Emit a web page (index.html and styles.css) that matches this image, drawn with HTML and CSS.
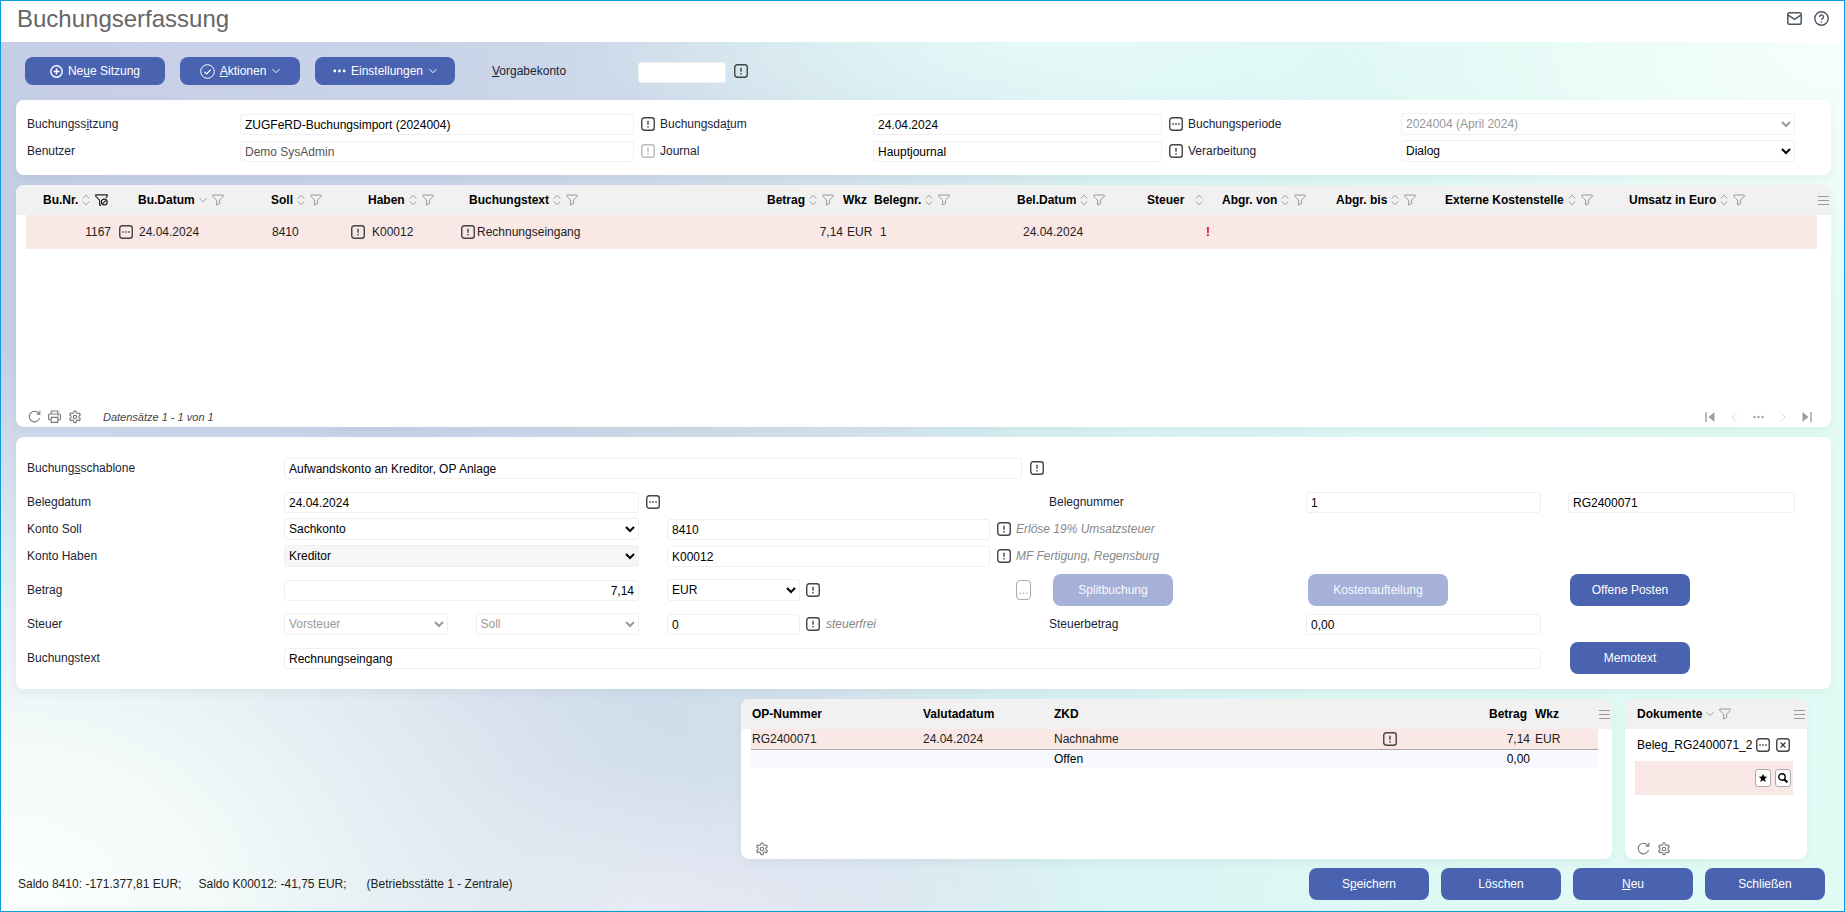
FILE: index.html
```html
<!DOCTYPE html>
<html lang="de">
    <head>
        <meta charset="UTF-8" />
        <meta name="viewport" content="width=device-width, initial-scale=1.0" />
        <title>Buchungserfassung</title>

        <link rel="stylesheet" href="styles.css">
    </head>
    <body>
        <!-- icons -->
        <svg class="sprite" xmlns="http://www.w3.org/2000/svg">
            <symbol id="i-info" viewBox="0 0 14 14">
                <rect x="0.75" y="0.75" width="12.5" height="12.5" rx="2.5" fill="none" stroke="currentColor" stroke-width="1.4" />
                <path d="M7 3.8v4M7 9v1.4" stroke="currentColor" stroke-width="1.4" />
            </symbol>
            <symbol id="i-more" viewBox="0 0 14 14">
                <rect x="0.75" y="0.75" width="12.5" height="12.5" rx="2.5" fill="none" stroke="currentColor" stroke-width="1.4" />
                <path d="M3.2 7h1.6M6.2 7h1.6M9.2 7h1.6" stroke="currentColor" stroke-width="1.5" />
            </symbol>
            <symbol id="i-close" viewBox="0 0 14 14">
                <rect x="0.75" y="0.75" width="12.5" height="12.5" rx="2.5" fill="none" stroke="currentColor" stroke-width="1.4" />
                <path d="M4.6 4.6l4.8 4.8M9.4 4.6l-4.8 4.8" stroke="currentColor" stroke-width="1.4" />
            </symbol>
            <symbol id="i-sort" viewBox="0 0 8 12">
                <path d="M0.8 4.4L4 1.2l3.2 3.2M0.8 7.6L4 10.8l3.2-3.2" fill="none" stroke="currentColor" />
            </symbol>
            <symbol id="i-down" viewBox="0 0 8 12">
                <path d="M0.5 4.2L4 7.7l3.5-3.5" fill="none" stroke="currentColor" />
            </symbol>
            <symbol id="i-filter" viewBox="0 0 12 12">
                <path d="M0.8 1h10.4v1.3L7.6 6.2v3.4L4.6 11V6.2L0.8 2.3z" fill="none" stroke="currentColor" stroke-linejoin="round" />
            </symbol>
            <symbol id="i-filter-on" viewBox="0 0 13 12">
                <path d="M6 11.2H4.600V6.200L0.800 2.300V0.800h11.400v1.500L10.800 3.800" fill="none" stroke="currentColor" stroke-width="1.200" />
                <circle cx="9.300" cy="8" r="2.900" fill="none" stroke="currentColor" stroke-width="1.200" />
                <path d="M7.600 9.700l3.400-3.400" stroke="currentColor" stroke-width="1.200" />
            </symbol>
            <symbol id="i-menu" viewBox="0 0 11 10">
                <path d="M0 1.5h11M0 5.5h11M0 9.5h11" stroke="currentColor" />
            </symbol>
            <symbol id="i-refresh" viewBox="0 0 13 13">
                <path d="M11.6 8.2A5.3 5.3 0 1 1 11 3.6M11.8 0.8v3.4H8.4" fill="none" stroke="currentColor" stroke-width="1.1" />
            </symbol>
            <symbol id="i-print" viewBox="0 0 13 13">
                <path d="M3.2 4V1h6.6v3M3.2 9.8H1.6a1 1 0 0 1-1-1V5a1 1 0 0 1 1-1h9.8a1 1 0 0 1 1 1v3.8a1 1 0 0 1-1 1H9.8M3.2 7.4h6.6v5H3.2zM9.5 5.8h1.3" fill="none" stroke="currentColor" stroke-width="1.1" />
            </symbol>
            <symbol id="i-gear" viewBox="0 0 24 24">
                <path d="M9.6 4.9l.7-3.1h3.4l.7 3.1 2 1.2 3.1-1 1.7 3-2.4 2.1v2.9l2.4 2.1-1.7 3-3.1-1-2 1.2-.7 3.2h-3.4l-.7-3.2-2-1.2-3.1 1-1.7-3 2.4-2.1v-2.9L2.8 8.1l1.7-3 3.1 1z" fill="none" stroke="currentColor" stroke-width="1.9" stroke-linejoin="round" />
                <circle cx="12" cy="12" r="3" fill="none" stroke="currentColor" stroke-width="1.9" />
            </symbol>
            <symbol id="i-mail" viewBox="0 0 15 13">
                <rect x="0.8" y="0.8" width="13.4" height="11.4" rx="1.8" fill="none" stroke="currentColor" stroke-width="1.5" />
                <path d="M1.2 3.2l6.3 4.2 6.3-4.2" fill="none" stroke="currentColor" stroke-width="1.5" />
            </symbol>
            <symbol id="i-help" viewBox="0 0 15 15">
                <circle cx="7.5" cy="7.5" r="6.7" fill="none" stroke="currentColor" stroke-width="1.4" />
                <path d="M5.5 6a2 2 0 1 1 2.9 1.7c-.6.3-.9.6-.9 1.3M7.5 10.2v1.4" fill="none" stroke="currentColor" stroke-width="1.4" />
            </symbol>
            <symbol id="i-plus" viewBox="0 0 13 13">
                <circle cx="6.5" cy="6.5" r="5.7" fill="none" stroke="currentColor" stroke-width="1.4" />
                <path d="M6.5 3.5v6M3.5 6.5h6" stroke="currentColor" stroke-width="1.6" />
            </symbol>
            <symbol id="i-check" viewBox="0 0 15 15">
                <circle cx="7.5" cy="7.5" r="6.8" fill="none" stroke="currentColor" />
                <path d="M4.5 7.8l2.2 2.2 4-4.4" fill="none" stroke="currentColor" stroke-width="1.2" />
            </symbol>
            <symbol id="i-dots" viewBox="0 0 13 4">
                <circle cx="1.8" cy="2" r="1.4" fill="currentColor" />
                <circle cx="6.5" cy="2" r="1.4" fill="currentColor" />
                <circle cx="11.2" cy="2" r="1.4" fill="currentColor" />
            </symbol>
            <symbol id="i-first" viewBox="0 0 10 10">
                <path d="M1 0v10" stroke="currentColor" stroke-width="1.4" />
                <path d="M9.5 0v10L3.5 5z" fill="currentColor" />
            </symbol>
            <symbol id="i-last" viewBox="0 0 10 10">
                <path d="M9 0v10" stroke="currentColor" stroke-width="1.4" />
                <path d="M0.5 0v10l6-5z" fill="currentColor" />
            </symbol>
            <symbol id="i-prev" viewBox="0 0 6 10">
                <path d="M5.2 0.6L1 5l4.2 4.4" fill="none" stroke="currentColor" />
            </symbol>
            <symbol id="i-next" viewBox="0 0 6 10">
                <path d="M0.8 0.6L5 5 0.8 9.4" fill="none" stroke="currentColor" />
            </symbol>
            <symbol id="i-star" viewBox="0 0 10 10">
                <path d="M5 0.8l1.2 2.8 3 .2-2.3 1.9.8 3.3L5 7.3 2.3 9l.8-3.3L.8 3.8l3-.2z" fill="currentColor" />
            </symbol>
            <symbol id="i-search" viewBox="0 0 10 10">
                <circle cx="4" cy="4" r="3.2" fill="none" stroke="currentColor" stroke-width="1.4" />
                <path d="M6.2 6.2l3.2 3.2" stroke="currentColor" stroke-width="2" />
            </symbol>
        </svg>

        <header class="header">
            <h1>Buchungserfassung</h1>
            <div class="header-icons">
                <button class="icon-btn" type="button" aria-label="Nachricht"><svg width="15" height="13"><use href="#i-mail" /></svg></button>
                <button class="icon-btn" type="button" aria-label="Hilfe"><svg width="15" height="15"><use href="#i-help" /></svg></button>
            </div>
        </header>

        <main class="main">
            <div class="toolbar">
                <button class="btn btn-wide" type="button"><svg width="13" height="13"><use href="#i-plus" /></svg><span>Ne<u>u</u>e Sitzung</span></button>
                <button class="btn" type="button"><svg width="15" height="15"><use href="#i-check" /></svg><span><u>A</u>ktionen</span><svg class="caret" width="8" height="12"><use href="#i-down" /></svg></button>
                <button class="btn btn-wide" type="button"><svg width="13" height="4"><use href="#i-dots" /></svg><span>Einstellungen</span><svg class="caret" width="8" height="12"><use href="#i-down" /></svg></button>
                <label for="vorgabe"><u>V</u>orgabekonto</label>
                <input id="vorgabe" type="text" />
                <button class="icon-btn" type="button" aria-label="Auswahl"><svg width="14" height="14"><use href="#i-info" /></svg></button>
            </div>

            <section class="panel session">
                <div class="session-line">
                    <label for="sitzung">Buchungss<u>i</u>tzung</label>
                    <input id="sitzung" type="text" value="ZUGFeRD-Buchungsimport (2024004)" />
                    <button class="icon-btn" type="button" aria-label="Auswahl"><svg width="14" height="14"><use href="#i-info" /></svg></button>
                    <label for="datum">Buchungsda<u>t</u>um</label>
                    <input id="datum" type="text" value="24.04.2024" />
                    <button class="icon-btn" type="button" aria-label="Kalender"><svg width="14" height="14"><use href="#i-more" /></svg></button>
                    <label for="periode">Buchungsperiode</label>
                    <select id="periode" disabled><option>2024004 (April 2024)</option></select>
                </div>
                <div class="session-line">
                    <label for="benutzer">Benutzer</label>
                    <input id="benutzer" type="text" value="Demo SysAdmin" disabled />
                    <button class="icon-btn" type="button" aria-label="Auswahl" disabled><svg width="14" height="14"><use href="#i-info" /></svg></button>
                    <label for="journal">Journal</label>
                    <input id="journal" type="text" value="Hauptjournal" />
                    <button class="icon-btn" type="button" aria-label="Auswahl"><svg width="14" height="14"><use href="#i-info" /></svg></button>
                    <label for="verarbeitung">Verarbeitung</label>
                    <select id="verarbeitung"><option>Dialog</option></select>
                </div>
            </section>

            <section class="panel bookings">
                <table class="grid">
                    <colgroup>
                        <col style="width: 10px" />
                        <col style="width: 112px" />
                        <col style="width: 133px" />
                        <col style="width: 97px" />
                        <col style="width: 92px" />
                        <col />
                        <col style="width: 76px" />
                        <col style="width: 31px" />
                        <col style="width: 143px" />
                        <col style="width: 130px" />
                        <col style="width: 75px" />
                        <col style="width: 114px" />
                        <col style="width: 109px" />
                        <col style="width: 184px" />
                        <col style="width: 188px" />
                        <col style="width: 14px" />
                    </colgroup>
                    <thead>
                        <tr>
                            <th></th>
                            <th class="first"><div class="head">Bu.Nr.<svg width="8" height="12"><use href="#i-sort" /></svg><svg class="filter on" width="13" height="12"><use href="#i-filter-on" /></svg></div></th>
                            <th><div class="head">Bu.Datum<svg width="8" height="12"><use href="#i-down" /></svg><svg class="filter" width="12" height="12"><use href="#i-filter" /></svg></div></th>
                            <th><div class="head">Soll<svg width="8" height="12"><use href="#i-sort" /></svg><svg class="filter" width="12" height="12"><use href="#i-filter" /></svg></div></th>
                            <th><div class="head">Haben<svg width="8" height="12"><use href="#i-sort" /></svg><svg class="filter" width="12" height="12"><use href="#i-filter" /></svg></div></th>
                            <th class="text"><div class="head">Buchungstext<svg width="8" height="12"><use href="#i-sort" /></svg><svg class="filter" width="12" height="12"><use href="#i-filter" /></svg></div></th>
                            <th><div class="head">Betrag<svg width="8" height="12"><use href="#i-sort" /></svg><svg class="filter" width="12" height="12"><use href="#i-filter" /></svg></div></th>
                            <th><div class="head">Wkz</div></th>
                            <th><div class="head">Belegnr.<svg width="8" height="12"><use href="#i-sort" /></svg><svg class="filter" width="12" height="12"><use href="#i-filter" /></svg></div></th>
                            <th><div class="head">Bel.Datum<svg width="8" height="12"><use href="#i-sort" /></svg><svg class="filter" width="12" height="12"><use href="#i-filter" /></svg></div></th>
                            <th><div class="head head-tax">Steuer<svg width="8" height="12"><use href="#i-sort" /></svg></div></th>
                            <th><div class="head">Abgr. von<svg width="8" height="12"><use href="#i-sort" /></svg><svg class="filter" width="12" height="12"><use href="#i-filter" /></svg></div></th>
                            <th><div class="head">Abgr. bis<svg width="8" height="12"><use href="#i-sort" /></svg><svg class="filter" width="12" height="12"><use href="#i-filter" /></svg></div></th>
                            <th><div class="head">Externe Kostenstelle<svg width="8" height="12"><use href="#i-sort" /></svg><svg class="filter" width="12" height="12"><use href="#i-filter" /></svg></div></th>
                            <th><div class="head">Umsatz in Euro<svg width="8" height="12"><use href="#i-sort" /></svg><svg class="filter" width="12" height="12"><use href="#i-filter" /></svg></div></th>
                            <th><button class="icon-btn menu" type="button" aria-label="Menü"><svg width="11" height="10"><use href="#i-menu" /></svg></button></th>
                        </tr>
                    </thead>
                    <tbody>
                        <tr class="selected">
                            <td></td>
                            <td><div class="cell end">1167<button class="icon-btn" type="button" aria-label="Details"><svg width="14" height="14"><use href="#i-more" /></svg></button></div></td>
                            <td><div class="cell">24.04.2024</div></td>
                            <td><div class="cell split">8410<button class="icon-btn" type="button" aria-label="Auswahl"><svg width="14" height="14"><use href="#i-info" /></svg></button></div></td>
                            <td><div class="cell wide">K00012</div></td>
                            <td><div class="cell lead"><button class="icon-btn" type="button" aria-label="Auswahl"><svg width="14" height="14"><use href="#i-info" /></svg></button>Rechnungseingang</div></td>
                            <td class="num">7,14</td>
                            <td><div class="cell wide">EUR</div></td>
                            <td><div class="cell far">1</div></td>
                            <td><div class="cell far">24.04.2024</div></td>
                            <td class="num warn">!</td>
                            <td></td>
                            <td></td>
                            <td></td>
                            <td></td>
                            <td></td>
                        </tr>
                    </tbody>
                </table>
                <div class="grid-footer">
                    <button class="icon-btn" type="button" aria-label="Aktualisieren"><svg width="13" height="13"><use href="#i-refresh" /></svg></button>
                    <button class="icon-btn" type="button" aria-label="Drucken"><svg width="13" height="13"><use href="#i-print" /></svg></button>
                    <button class="icon-btn" type="button" aria-label="Einstellungen"><svg width="14" height="14"><use href="#i-gear" /></svg></button>
                    <em class="count">Datensätze 1 - 1 von 1</em>
                    <nav class="pager">
                        <button class="icon-btn" type="button" aria-label="Erste"><svg width="10" height="10"><use href="#i-first" /></svg></button>
                        <button class="icon-btn off" type="button" aria-label="Zurück"><svg width="6" height="10"><use href="#i-prev" /></svg></button>
                        <button class="icon-btn" type="button" aria-label="Seite"><svg width="11" height="4"><use href="#i-dots" /></svg></button>
                        <button class="icon-btn off" type="button" aria-label="Weiter"><svg width="6" height="10"><use href="#i-next" /></svg></button>
                        <button class="icon-btn" type="button" aria-label="Letzte"><svg width="10" height="10"><use href="#i-last" /></svg></button>
                    </nav>
                </div>
            </section>

            <section class="panel entry">
                <div class="line">
                    <label for="schablone">Buchung<u>s</u>schablone</label>
                    <div class="field template">
                        <input id="schablone" type="text" value="Aufwandskonto an Kreditor, OP Anlage" />
                        <button class="icon-btn" type="button" aria-label="Auswahl"><svg width="14" height="14"><use href="#i-info" /></svg></button>
                    </div>
                </div>
                <div class="group">
                    <div class="line">
                        <label for="belegdatum">Belegdatum</label>
                        <input id="belegdatum" type="text" value="24.04.2024" />
                        <div class="field after"><button class="icon-btn" type="button" aria-label="Kalender"><svg width="14" height="14"><use href="#i-more" /></svg></button></div>
                        <label class="col-label" for="belegnr">Belegnummer</label>
                        <input class="col-d" id="belegnr" type="text" value="1" />
                        <input class="col-e" type="text" value="RG2400071" aria-label="Externe Belegnummer" />
                    </div>
                    <div class="line">
                        <label for="soll-art">Konto Soll</label>
                        <select id="soll-art"><option>Sachkonto</option></select>
                        <input class="col-b" type="text" value="8410" aria-label="Konto Soll Nummer" />
                        <div class="field hint">
                            <button class="icon-btn" type="button" aria-label="Auswahl"><svg width="14" height="14"><use href="#i-info" /></svg></button>
                            <em>Erlöse 19% Umsatzsteuer</em>
                        </div>
                    </div>
                    <div class="line">
                        <label for="haben-art">Konto Haben</label>
                        <select class="active" id="haben-art"><option>Kreditor</option></select>
                        <input class="col-b" type="text" value="K00012" aria-label="Konto Haben Nummer" />
                        <div class="field hint">
                            <button class="icon-btn" type="button" aria-label="Auswahl"><svg width="14" height="14"><use href="#i-info" /></svg></button>
                            <em>MF Fertigung, Regensburg</em>
                        </div>
                    </div>
                </div>
                <div class="line">
                    <label for="betrag">Betrag</label>
                    <input class="right" id="betrag" type="text" value="7,14" />
                    <div class="field col-b short">
                        <select aria-label="Währung"><option>EUR</option></select>
                        <button class="icon-btn" type="button" aria-label="Auswahl"><svg width="14" height="14"><use href="#i-info" /></svg></button>
                    </div>
                    <button class="more-btn" type="button" disabled>...</button>
                    <div class="field col-label split-cell"><button class="btn" type="button" disabled>Splitbuchung</button></div>
                    <div class="field col-d btn-cell"><button class="btn btn-wide" type="button" disabled>Kostenaufteilung</button></div>
                    <div class="field col-e btn-cell"><button class="btn" type="button">Offene Posten</button></div>
                </div>
                <div class="line">
                    <label for="steuer">Steuer</label>
                    <div class="field tax">
                        <select id="steuer" disabled><option>Vorsteuer</option></select>
                        <select disabled aria-label="Steuerseite"><option>Soll</option></select>
                    </div>
                    <div class="field col-b short">
                        <input type="text" value="0" aria-label="Steuerschlüssel" />
                        <button class="icon-btn" type="button" aria-label="Auswahl"><svg width="14" height="14"><use href="#i-info" /></svg></button>
                        <em>steuerfrei</em>
                    </div>
                    <label class="col-label" for="steuerbetrag">Steuerbetrag</label>
                    <input class="col-d" id="steuerbetrag" type="text" value="0,00" />
                </div>
                <div class="line">
                    <label for="text">Buchungstext</label>
                    <input class="booking-text" id="text" type="text" value="Rechnungseingang" />
                    <div class="field col-e btn-cell"><button class="btn" type="button">Memotext</button></div>
                </div>
            </section>

            <div class="bottom">
                <section class="panel open-items">
                    <table class="grid small">
                        <colgroup>
                            <col style="width: 10px" />
                            <col style="width: 171px" />
                            <col style="width: 131px" />
                            <col />
                            <col style="width: 30px" />
                            <col style="width: 121px" />
                            <col style="width: 64px" />
                            <col style="width: 14px" />
                        </colgroup>
                        <thead>
                            <tr>
                                <th></th>
                                <th class="item">OP-Nummer</th>
                                <th class="item">Valutadatum</th>
                                <th class="item">ZKD</th>
                                <th></th>
                                <th class="amount">Betrag</th>
                                <th class="item">Wkz</th>
                                <th><button class="icon-btn menu" type="button" aria-label="Menü"><svg width="11" height="10"><use href="#i-menu" /></svg></button></th>
                            </tr>
                        </thead>
                        <tbody>
                            <tr class="selected">
                                <td></td>
                                <td class="item">RG2400071</td>
                                <td class="item">24.04.2024</td>
                                <td class="item">Nachnahme</td>
                                <td><button class="icon-btn" type="button" aria-label="Auswahl"><svg width="14" height="14"><use href="#i-info" /></svg></button></td>
                                <td class="num">7,14</td>
                                <td class="item">EUR</td>
                                <td></td>
                            </tr>
                            <tr class="sum">
                                <td></td>
                                <td></td>
                                <td></td>
                                <td class="item">Offen</td>
                                <td></td>
                                <td class="num">0,00</td>
                                <td></td>
                                <td></td>
                            </tr>
                        </tbody>
                    </table>
                    <div class="grid-footer">
                        <button class="icon-btn" type="button" aria-label="Einstellungen"><svg width="14" height="14"><use href="#i-gear" /></svg></button>
                    </div>
                </section>

                <section class="panel documents">
                    <div class="doc-head">
                        <div class="head">Dokumente<svg width="8" height="12"><use href="#i-down" /></svg><svg class="filter" width="12" height="12"><use href="#i-filter" /></svg></div>
                        <button class="icon-btn menu" type="button" aria-label="Menü"><svg width="11" height="10"><use href="#i-menu" /></svg></button>
                    </div>
                    <div class="doc-row">
                        <span>Beleg_RG2400071_2</span>
                        <button class="icon-btn" type="button" aria-label="Details"><svg width="14" height="14"><use href="#i-more" /></svg></button>
                        <button class="icon-btn" type="button" aria-label="Entfernen"><svg width="14" height="14"><use href="#i-close" /></svg></button>
                    </div>
                    <div class="doc-new">
                        <button class="box-btn" type="button" aria-label="Neu"><svg width="10" height="10"><use href="#i-star" /></svg></button>
                        <button class="box-btn" type="button" aria-label="Suchen"><svg width="10" height="10"><use href="#i-search" /></svg></button>
                    </div>
                    <div class="grid-footer">
                        <button class="icon-btn" type="button" aria-label="Aktualisieren"><svg width="13" height="13"><use href="#i-refresh" /></svg></button>
                        <button class="icon-btn" type="button" aria-label="Einstellungen"><svg width="14" height="14"><use href="#i-gear" /></svg></button>
                    </div>
                </section>
            </div>

            <footer class="footer">
                <span>Saldo 8410: -171.377,81 EUR;</span>
                <span>Saldo K00012: -41,75 EUR;</span>
                <span class="branch">(Betriebsstätte 1 - Zentrale)</span>
                <div class="actions">
                    <button class="btn" type="button"><span>S<u>p</u>eichern</span></button>
                    <button class="btn" type="button">Löschen</button>
                    <button class="btn" type="button"><span><u>N</u>eu</span></button>
                    <button class="btn" type="button">Schließen</button>
                </div>
            </footer>
        </main>
    </body>
</html>
```
FILE: styles.css
```css
* {
    margin: 0;
    padding: 0;
    box-sizing: border-box;
}

body {
    display: flex;
    flex-direction: column;
    min-height: 100vh;
    border: 1px solid #0a9bdc;
    background-color: #fff;
    color: #222;
    font-family: Arial, "Liberation Sans", sans-serif;
    font-size: 12px;
    line-height: 16px;
}

input,
select,
button {
    font: inherit;
}

svg {
    display: block;
    flex: none;
}

.sprite {
    position: absolute;
    width: 0;
    height: 0;
}

/* header */
.header {
    display: flex;
    align-items: center;
    justify-content: space-between;
    height: 41px;
    padding: 0 15px 6px 16px;
}

.header h1 {
    color: #666;
    font-size: 24px;
    font-weight: normal;
    line-height: 28px;
}

.header-icons {
    display: flex;
    align-items: center;
    gap: 12px;
}

.header-icons .icon-btn {
    color: #4b5563;
}

.main {
    display: flex;
    flex: 1;
    flex-direction: column;
    padding: 0 13px 11px 15px;
    background:
        radial-gradient(ellipse 720px 560px at 0 100%, #fcfffe 0%, #f3faf9 30%, rgba(228, 239, 243, 0.85) 62%, rgba(214, 226, 238, 0) 100%),
        radial-gradient(ellipse 420px 150px at 36% 100%, #e8e9f4 0%, rgba(226, 231, 242, 0) 100%),
        radial-gradient(ellipse 500px 320px at 100% 0, #f6fffc 0%, rgba(240, 255, 251, 0) 100%),
        radial-gradient(ellipse 480px 120px at 57% 0, rgba(229, 252, 248, 0.9) 0%, rgba(226, 250, 247, 0) 100%),
        linear-gradient(94deg, #c5cee7 0%, #c9d3e8 22%, #cfdbea 36%, #d5e6ef 48%, #daf3f4 60%, #def8f4 75%, #e3fbf5 100%);
}

.panel {
    margin-bottom: 10px;
    border-radius: 8px;
    background-color: #fff;
    box-shadow: 0 4px 10px rgba(40, 80, 90, 0.06);
}

/* buttons */
.btn {
    display: inline-flex;
    align-items: center;
    justify-content: center;
    gap: 5px;
    width: 120px;
    height: 32px;
    border: none;
    border-radius: 8px;
    background-color: #4a63b0;
    color: #fff;
    white-space: nowrap;
}

.btn-wide {
    width: 140px;
}

.btn:disabled {
    background-color: #a5b1d8;
    color: #f8f9fd;
}

.caret {
    margin-left: 1px;
}

.icon-btn {
    display: block;
    flex: none;
    border: none;
    background: none;
    color: #444;
}

.icon-btn:disabled {
    color: #bbb;
}

/* fields */
input,
select {
    width: 100%;
    min-width: 0;
    border: 1px solid #f0f0f0;
    border-radius: 3px;
    background-color: #fff;
    color: #000;
}

input {
    height: 21px;
    margin-top: 2px;
    padding: 1px 4px 0;
}

select {
    height: 22px;
}

input:disabled {
    color: #555;
}

select:disabled {
    color: #999;
    opacity: 1;
}

select.active {
    background-color: #f6f6f6;
}

label {
    color: #1c2333;
}

.toolbar {
    display: flex;
    align-items: center;
    height: 58px;
    padding-left: 9px;
}

.toolbar .btn {
    height: 28px;
    margin-right: 15px;
}

.toolbar label {
    width: 146px;
    margin-left: 22px;
}

.toolbar input {
    width: 88px;
    margin-right: 8px;
}

.session {
    padding: 10px 36px 11px 11px;
}

.session-line {
    display: grid;
    grid-template-columns: 213px 394fr 26px 213px 289fr 26px 213px 394fr;
    align-items: center;
    height: 27px;
}

.session-line .icon-btn {
    margin-left: 7px;
}

/* tables */
.bookings {
    display: flex;
    flex: 1;
    flex-direction: column;
}

.grid {
    width: 100%;
    table-layout: fixed;
    border-collapse: collapse;
}

.grid th {
    height: 30px;
    background-color: #f1f1f1;
    color: #000;
    text-align: left;
    white-space: nowrap;
}

.grid th:first-child {
    border-top-left-radius: 8px;
}

.grid th:last-child {
    padding-left: 1px;
    border-top-right-radius: 8px;
}

.grid th.first {
    padding-left: 17px;
}

.grid th.text {
    padding-left: 9px;
}

.grid td {
    height: 34px;
    white-space: nowrap;
}

.grid .selected td {
    background-color: #f9e8e6;
}

.grid .selected td:first-child,
.grid .selected td:last-child {
    background-color: #fff;
}

.head {
    display: flex;
    align-items: center;
    gap: 4px;
    color: #000;
    font-weight: bold;
}

.head svg {
    color: #999;
}

.head .filter {
    margin-left: 1px;
}

.head .on {
    color: #222;
}

.head-tax {
    gap: 11px;
}

.menu {
    color: #999;
}

.cell {
    display: flex;
    align-items: center;
    padding-left: 1px;
}

.cell.end {
    justify-content: flex-end;
    gap: 8px;
    padding-right: 5px;
}

.cell.split {
    justify-content: space-between;
    padding-right: 3px;
}

.cell.wide {
    padding-left: 4px;
}

.cell.far {
    padding-left: 6px;
}

.cell.lead {
    gap: 2px;
}

.num {
    text-align: right;
}

.warn {
    padding-right: 12px;
    color: #f00000;
    font-weight: bold;
}

.grid-footer {
    display: flex;
    align-items: center;
    gap: 7px;
    height: 21px;
    margin-top: auto;
    padding: 0 19px 0 12px;
}

.grid-footer .icon-btn {
    color: #777;
}

.count {
    margin-left: 14px;
    color: #444;
    font-size: 11px;
}

.pager {
    display: flex;
    align-items: center;
    gap: 16px;
    margin-left: auto;
}

.pager .icon-btn {
    color: #999fa8;
}

.pager .off {
    color: #d5d5d5;
}

/* entry form */
.entry {
    display: flex;
    flex-direction: column;
    gap: 7px;
    padding: 17px 36px 18px 11px;
}

.line {
    display: grid;
    grid-template-columns: 257px 355fr 28px 323fr 59px 257px 235fr 27px 227fr;
    grid-template-rows: 27px;
    align-items: center;
}

.line > * {
    grid-row: 1;
}

.field {
    display: flex;
    align-items: center;
}

.field em {
    color: #888;
    white-space: nowrap;
}

.template {
    grid-column: 2 / 6;
    gap: 8px;
    padding-right: 5px;
}

.after {
    grid-column: 3;
    padding-left: 7px;
}

.col-b {
    grid-column: 4;
}

.hint {
    grid-column: 5 / 7;
    gap: 5px;
    padding-left: 7px;
}

.col-label {
    grid-column: 6;
}

.col-d {
    grid-column: 7;
}

.col-e {
    grid-column: 9;
}

.booking-text {
    grid-column: 2 / 8;
}

.short {
    gap: 6px;
}

.short input,
.short select {
    width: 133px;
}

.tax {
    gap: 28px;
}

.right {
    text-align: right;
}

.split-cell {
    padding-left: 4px;
}

.btn-cell {
    padding-left: 2px;
}

.more-btn {
    grid-column: 5;
    justify-self: end;
    width: 15px;
    height: 20px;
    margin-right: 18px;
    border: 1px solid #aaa;
    border-radius: 4px;
    background-color: #fff;
    color: #aaa;
}

/* lower tables */
.bottom {
    display: flex;
    gap: 13px;
    padding: 0 24px 0 725px;
}

.bottom .panel {
    display: flex;
    flex-direction: column;
    height: 160px;
    margin-bottom: 9px;
}

.open-items {
    flex: 1;
    min-width: 0;
}

.open-items .grid-footer {
    padding-left: 14px;
}

.small td {
    height: 20px;
}

.small .item {
    padding-left: 1px;
}

.small .amount {
    padding-right: 7px;
    text-align: right;
}

.small .num {
    padding-right: 4px;
}

.small .sum td {
    height: 19px;
    border-top: 1px solid #aaa;
    background-color: #f8f9fe;
    color: #000;
}

.small .sum td:first-child,
.small .sum td:last-child {
    border: none;
    background-color: #fff;
}

.documents {
    width: 182px;
}

.doc-head {
    display: flex;
    align-items: center;
    justify-content: space-between;
    height: 30px;
    padding: 0 2px 0 12px;
    border-radius: 8px 8px 0 0;
    background-color: #f1f1f1;
}

.doc-row {
    display: flex;
    align-items: center;
    gap: 6px;
    height: 32px;
    padding-left: 12px;
    color: #000;
}

.doc-row span {
    width: 113px;
}

.doc-new {
    display: flex;
    align-items: center;
    justify-content: flex-end;
    gap: 4px;
    height: 34px;
    margin: 0 14px 0 10px;
    padding-right: 2px;
    background-color: #f9e8e6;
}

.box-btn {
    display: flex;
    align-items: center;
    justify-content: center;
    width: 16px;
    height: 18px;
    border: 1px solid #aaa;
    border-radius: 3px;
    background-color: #fff;
    color: #000;
}

/* footer */
.footer {
    display: flex;
    align-items: center;
    gap: 17px;
    padding: 0 6px 0 2px;
}

.branch {
    margin-left: 3px;
}

.actions {
    display: flex;
    gap: 12px;
    margin-left: auto;
}
```
